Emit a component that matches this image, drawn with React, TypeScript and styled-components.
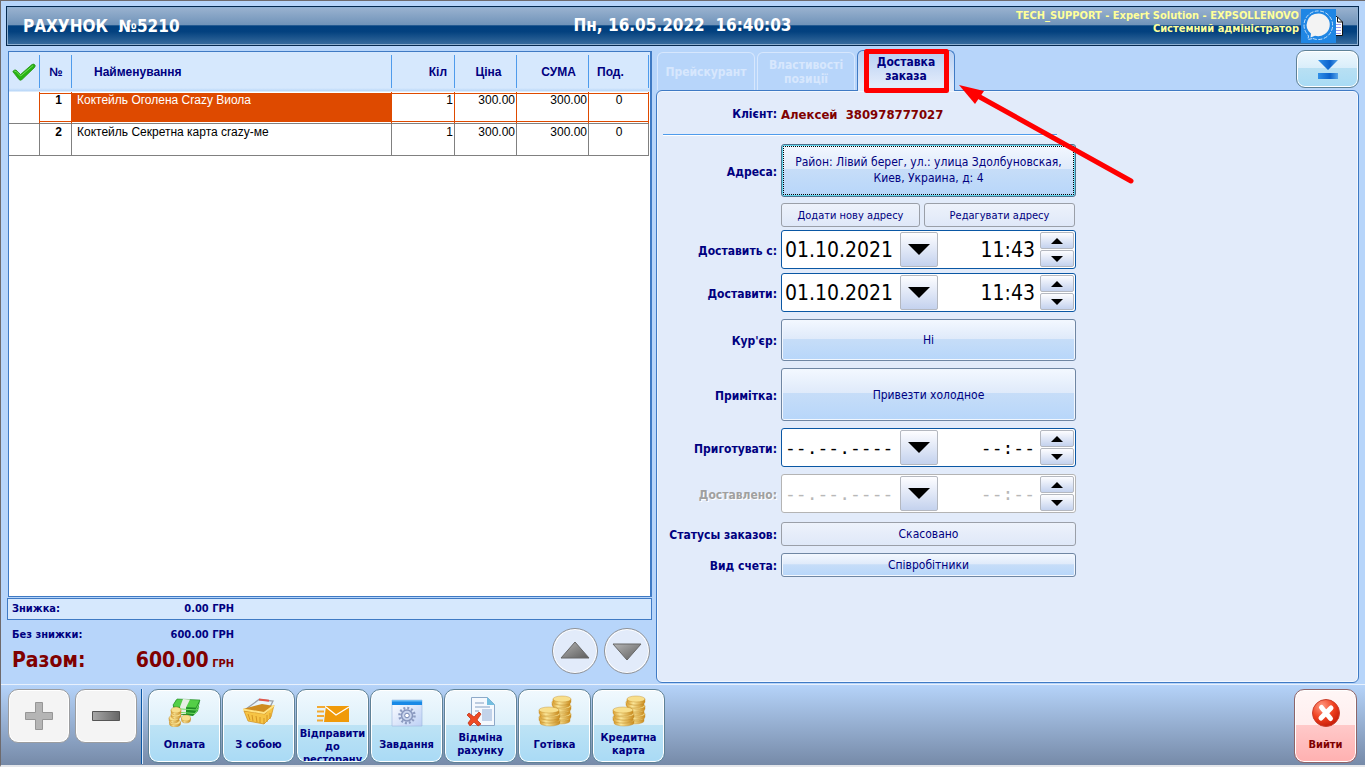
import React, { useId } from 'react';
import styled, { createGlobalStyle, css } from 'styled-components';

const UI_FONT = '"DejaVu Sans Condensed", "DejaVu Sans", sans-serif';
const GRID_FONT = '"Liberation Sans", Arial, sans-serif';

const GlobalStyle = createGlobalStyle`
  *, *::before, *::after { box-sizing: border-box; }
  body { margin: 0; font-family: ${UI_FONT}; color: #000080; }
  button, input { font-family: inherit; color: inherit; margin: 0; padding: 0; }
  button { cursor: pointer; }
  svg { display: block; flex: none; }
`;

const Window = styled.div`
  display: flex;
  flex-direction: column;
  min-height: 100vh;
  background: #b7d5fa;
  border: solid #6e6a6c;
  border-width: 1px 0 0 1px;
  border-bottom: 2px solid #e4e6ea;
`;

/* ---------- title bar ---------- */

const TitleBar = styled.header`
  display: grid;
  grid-template-columns: 1fr auto 1fr;
  height: 40px;
  margin: 5px 6px 4px 5px;
  color: #fff;
  border: 1px solid #06294f;
  background: linear-gradient(#9bb3d0, #6f93b9 48%, #00407f 49%, #03417f 65%, #3a6d9e);
  box-shadow: inset 0 0 0 1px #8fb0d2;
`;

const Title = styled.h1`
  margin: 0;
  padding-left: 16px;
  font-size: 17px;
  line-height: 38px;
  white-space: pre;
`;

const Clock = styled.time`
  font-size: 17px;
  font-weight: bold;
  line-height: 36px;
  white-space: pre;
`;

const Session = styled.div`
  display: flex;
  justify-content: flex-end;
  padding: 2px 15px 0 0;
`;

const UserInfo = styled.p`
  margin: 0 2px 0 0;
  color: #ffff99;
  font-size: 11px;
  font-weight: bold;
  line-height: 13px;
  text-align: right;
  white-space: nowrap;
`;

const DocSlot = styled.span`
  padding-top: 7px;
`;

/* ---------- main area ---------- */

const Main = styled.main`
  flex: 1;
  display: grid;
  grid-template-columns: minmax(0, 645fr) minmax(0, 703fr);
  gap: 4px;
  padding: 0 6px 1px 6px;
`;

const Bill = styled.section`
  display: flex;
  flex-direction: column;
`;

const BillSheet = styled.div`
  flex: 1;
  margin: 1px 0 0 1px;
  padding-right: 1px;
  border: 1px solid #3f7ac4;
  border-right-width: 2px;
  background: linear-gradient(#d6e8fd 0 36px, #b9d7f8 39px, #fff 40px) no-repeat 0 0 / 100% 40px, #fff;
`;

const BillTable = styled.table`
  width: 100%;
  table-layout: fixed;
  border-collapse: separate;
  border-spacing: 0;
  font-family: ${GRID_FONT};
  font-size: 12px;
  line-height: 14px;
`;

const Col = styled.col<{ $w?: number }>`
  ${(p) => p.$w && `width: ${p.$w}px;`}
`;

const HeadCell = styled.th<{ $align?: string; $pad?: string }>`
  height: 40px;
  padding: ${(p) => p.$pad ?? '0'};
  text-align: ${(p) => p.$align ?? 'center'};
  background: linear-gradient(#4e9bec, #4e9bec) no-repeat right 3px / 1px 33px;
`;

const Cell = styled.td<{
  $align?: string;
  $selected?: boolean;
  $filled?: boolean;
  $strong?: boolean;
  $pad?: string;
}>`
  height: 32px;
  padding: ${(p) => p.$pad ?? '1px 1px 0 5px'};
  vertical-align: top;
  text-align: ${(p) => p.$align ?? 'right'};
  font-weight: ${(p) => (p.$strong ? 'bold' : 'normal')};
  white-space: nowrap;
  color: #000;
  border: solid #808080;
  border-width: 0 1px 1px 0;
  ${(p) =>
    p.$selected &&
    css`
      border-right-color: #de4a00;
      box-shadow: inset 0 1px #fff, inset 0 2px #de4a00, inset 0 -1px #fff, inset 0 -2px #de4a00;
    `}
  ${(p) =>
    p.$filled &&
    css`
      color: #fff;
      background: #de4a00;
    `}
`;

const MarkCell = styled(Cell)`
  box-shadow: none;
`;

const DiscountBar = styled.div`
  height: 22px;
  margin-top: 1px;
  padding-left: 4px;
  border: 1px solid #3f7ac4;
  background: #d6e8fd;
`;

const Totals = styled.div`
  display: flex;
  justify-content: space-between;
  height: 63px;
  padding: 8px 2px 0 5px;
`;

const SumRow = styled.div<{ $line: number; $total?: boolean }>`
  display: grid;
  grid-template-columns: 80px 142px;
  align-items: baseline;
  font-size: 11px;
  font-weight: bold;
  line-height: ${(p) => p.$line}px;
  white-space: nowrap;
  color: ${(p) => (p.$total ? '#800000' : 'inherit')};
`;

const SumValue = styled.span`
  text-align: right;
`;

const Big = styled.strong`
  font-size: 21px;
`;

const Scroller = styled.div`
  display: flex;
  gap: 6px;
`;

const RoundButton = styled.button`
  display: grid;
  place-items: center;
  width: 46px;
  height: 46px;
  border: 1px solid #8f9297;
  border-radius: 50%;
  background: #e2ebfa;
  box-shadow: inset 0 0 0 1px #fff;
`;

/* ---------- right side ---------- */

const Side = styled.section`
  display: flex;
  flex-direction: column;
  min-width: 0;
`;

const TabRow = styled.div`
  display: flex;
  align-items: flex-end;
  height: 40px;
`;

const TabList = styled.div`
  display: flex;
  align-items: flex-end;
  gap: 2px;
  padding-left: 1px;
`;

const Tab = styled.button<{ $active?: boolean }>`
  position: relative;
  width: 98px;
  height: 38px;
  border: 1px solid #d7e7fd;
  border-bottom: 0;
  border-radius: 6px 6px 0 0;
  background: transparent;
  color: #d7e7fd;
  font-size: 12px;
  font-weight: bold;
  line-height: 14px;
  ${(p) =>
    p.$active &&
    css`
      z-index: 1;
      height: 41px;
      margin-bottom: -1px;
      padding-bottom: 5px;
      border-color: #3f7ac4;
      background: linear-gradient(#b7d0f3, #e2ebfa 85%);
      color: #000080;
    `}
`;

const Callout = styled.svg`
  position: absolute;
  left: 6px;
  top: -2px;
  pointer-events: none;
`;

const CollapseButton = styled.button`
  display: grid;
  place-items: center;
  align-self: flex-start;
  width: 63px;
  height: 38px;
  margin-left: auto;
  border: 1px solid #5f8297;
  border-radius: 9px;
  background: linear-gradient(#eff8fd, #d9eefa 47%, #b8e0f3 48%, #a8dbf5);
  box-shadow: inset 0 0 0 1px #fff;
`;

const Panel = styled.div`
  flex: 1;
  border: 1px solid #3f7ac4;
  border-radius: 6px;
  background: #e2ebfa;
  box-shadow: inset 0 0 0 1px #f2f7fe;
`;

const ClientRow = styled.div`
  display: grid;
  grid-template-columns: 114px auto;
  gap: 4px;
  width: 394px;
  height: 44px;
  margin-left: 6px;
  border-bottom: 1px solid #4e9bec;
  box-shadow: 0 1px #fff;
  font-size: 12px;
  font-weight: bold;
  line-height: 47px;
`;

const ClientCaption = styled.span`
  text-align: right;
`;

const ClientName = styled.output`
  color: #800000;
  font-size: 13px;
  white-space: pre;
`;

const Form = styled.form`
  padding: 9px 0 8px;
`;

const FormRow = styled.div<{ $h: number; $gap?: number }>`
  display: grid;
  grid-template-columns: 120px 295px;
  column-gap: 4px;
  align-items: center;
  min-height: ${(p) => p.$h}px;
  margin-top: ${(p) => p.$gap ?? 0}px;
`;

const FieldLabel = styled.label<{ $muted?: boolean }>`
  padding-top: 2px;
  color: ${(p) => (p.$muted ? '#a0a0a0' : 'inherit')};
  text-shadow: ${(p) => (p.$muted ? '1px 1px #fff' : 'none')};
  font-size: 12px;
  font-weight: bold;
  text-align: right;
  white-space: nowrap;
`;

const GlossButton = styled.button`
  height: 100%;
  border: 1px solid #6f86a3;
  border-radius: 3px;
  background: linear-gradient(#f3f8ff, #dfeafa 47%, #c6ddf8 48%, #b7d6fa);
  box-shadow: inset 0 0 0 1px #f2f7fe;
  font-size: 12px;
  line-height: 16px;
`;

const AddressButton = styled(GlossButton)`
  padding-bottom: 2px;
  border-color: #4f6f8c;
  box-shadow: inset 0 0 0 1px #62d9ee;
  outline: 1px dotted #000;
  outline-offset: -3px;
`;

const FlatButton = styled.button<{ $small?: boolean }>`
  height: 100%;
  min-height: 24px;
  border: 1px solid #9a9fa8;
  border-radius: 3px;
  background: linear-gradient(#edf2fb, #dfe8f8);
  font-size: ${(p) => (p.$small ? 11 : 12)}px;
`;

const AddressActions = styled.div`
  grid-column: 2;
  display: grid;
  grid-template-columns: 139px 151px;
  gap: 4px;
`;

const DateBox = styled.div<{ $muted?: boolean }>`
  display: grid;
  grid-template-columns: 117px 38px 1fr 34px;
  height: 39px;
  padding: 1px;
  border: 1px solid ${(p) => (p.$muted ? '#b4b4b4' : '#0a57a4')};
  border-radius: 3px;
  background: #fff;
  color: ${(p) => (p.$muted ? '#b8b8b8' : '#000')};
`;

const DateInput = styled.input<{ $align?: string; $blank?: boolean }>`
  min-width: 0;
  width: 100%;
  padding: ${(p) => (p.$align === 'right' ? '0 5px 0 0' : '0 0 0 2px')};
  border: 0;
  background: transparent;
  text-align: ${(p) => p.$align ?? 'left'};
  font-family: ${(p) => (p.$blank ? '"DejaVu Sans Mono", monospace' : UI_FONT)};
  font-size: ${(p) => (p.$blank ? 18 : 21)}px;
`;

const StepButton = styled.button`
  display: grid;
  place-items: center;
  border: 1px solid #b4b8c0;
  border-radius: 2px;
  background: linear-gradient(#fdfdff, #c4d2ee);
`;

const Stepper = styled.div`
  display: grid;
  grid-template-rows: 1fr 1fr;
  gap: 1px;
`;

/* ---------- bottom toolbar ---------- */

const Toolbar = styled.footer`
  display: flex;
  align-items: flex-start;
  height: 81px;
  padding: 4px 8px 0 7px;
  border-top: 1px solid #e8f1fd;
  background: linear-gradient(#b5d3f9, #768aa8);
`;

const Group = styled.div<{ $gap: number }>`
  display: flex;
  gap: ${(p) => p.$gap}px;
`;

const Divider = styled.span`
  width: 2px;
  height: 75px;
  margin: 0 5px 0 4px;
  background: linear-gradient(90deg, #0a57a4 50%, #dce9fa 50%);
`;

const TOOL_TONES = {
  blue: css`
    border-color: #5f8297;
    background: linear-gradient(#f1f9fe, #ddf0fa 48%, #bde3f5 49%, #a9daf5);
  `,
  red: css`
    border-color: #8f6468;
    color: #800000;
    background: linear-gradient(#fff6f6, #ffeeee 48%, #ffc9c9 49%, #ffb0b0);
  `,
};

const ToolButton = styled.button<{ $tone: 'blue' | 'red' }>`
  display: flex;
  flex-direction: column;
  align-items: center;
  width: ${(p) => (p.$tone === 'red' ? 63 : 73)}px;
  height: 74px;
  padding-top: 5px;
  border: 1px solid;
  border-radius: 10px;
  box-shadow: inset 0 0 0 1px #fff;
  font-size: 11px;
  font-weight: bold;
  line-height: 13px;
  ${(p) => TOOL_TONES[p.$tone]}
`;

const ToolLabel = styled.span`
  display: flex;
  align-items: safe center;
  justify-content: center;
  width: 100%;
  height: 34px;
  overflow: hidden;
`;

const CountButton = styled.button`
  display: grid;
  place-items: center;
  width: 62px;
  height: 54px;
  border: 1px solid #9b9da0;
  border-radius: 10px;
  background: #f4f4f4;
  box-shadow: inset 0 0 0 1px #fff;
`;

const ExitSlot = styled.div`
  margin-left: auto;
`;

/* ---------- icons ---------- */

const CheckIcon = () => (
  <svg width="24" height="18" viewBox="0 0 24 18">
    <path
      d="M.8 8.500Q2 6.600 4 7L8.500 11.500 20 1.500Q22 .3 23.300 2.500 23 4 22 5L10 16.500Q8.500 18 7 16.500Z"
      fill="#27b512"
      stroke="#269215"
      strokeWidth=".8"
      strokeLinejoin="round"
    />
    <path d="M2.500 8.600 4 8.300 8.600 13 21 2.600" fill="none" stroke="#74d95c" />
  </svg>
);

const ChatIcon = () => (
  <svg width="35" height="34" viewBox="0 0 35 34">
    <path fill="#1f86e4" d="M0 0h35v34H0z" />
    <path
      d="M12 29.500A14.300 14.300 0 1 0 5 23.500L7.500 27 7 30.500Z"
      fill="none"
      stroke="#c4e0fa"
      strokeDasharray="4 1.500"
    />
    <path d="M17.500 4.500A11.700 11.300 0 1 1 14 26.700L9.500 28.500 10 24.500A11.700 11.300 0 0 1 17.500 4.500Z" fill="#f3f3f3" />
  </svg>
);

const DocIcon = () => (
  <svg width="7" height="20" viewBox="0 0 7 20">
    <path d="M0 .5h1L6.500 6v13.500H0Z" fill="#fff" />
    <path d="M0 .5h1L6.500 6v13.500H0M1.500 1v5h5" fill="none" stroke="#111" />
    <path d="M0 8.500h5M0 11.500h5M0 14.500h5M0 17.500h5" stroke="#9a98ee" />
  </svg>
);

const CollapseIcon = () => (
  <svg width="20" height="19" viewBox="0 0 20 19">
    <defs>
      <linearGradient id="collapse">
        <stop stopColor="#2f8fe8" />
        <stop offset=".6" stopColor="#0b62cc" />
        <stop offset="1" stopColor="#55a4ea" />
      </linearGradient>
    </defs>
    <path d="M0 0h20L10 10ZM0 13h20v6H0Z" fill="url(#collapse)" />
  </svg>
);

const ScrollArrow = ({ down }: { down?: boolean }) => (
  <svg width="30" height="18" viewBox="0 0 30 18">
    <defs>
      <linearGradient id={down ? 'arrowDown' : 'arrowUp'} x2="1" y2="1">
        <stop stopColor="#b5b5b5" />
        <stop offset="1" stopColor="#5c5c5c" />
      </linearGradient>
    </defs>
    <path
      d={down ? 'M1 2h28L15 18Z' : 'M15 0 29 16H1Z'}
      fill={`url(#${down ? 'arrowDown' : 'arrowUp'})`}
      stroke="#666"
    />
  </svg>
);

const Triangle = ({ size, up }: { size: number; up?: boolean }) => (
  <svg width={size} height={size / 2} viewBox="0 0 20 10">
    <path d={up ? 'M0 10h20L10 0Z' : 'M0 0h20L10 10Z'} />
  </svg>
);

const PlusIcon = () => (
  <svg width="28" height="28" viewBox="0 0 28 28">
    <path d="M10.500 .5h7v10h10v7h-10v10h-7v-10H.5v-7h10Z" fill="#b5b5b5" stroke="#969696" />
  </svg>
);

const MinusIcon = () => (
  <svg width="28" height="10" viewBox="0 0 28 10">
    <defs>
      <linearGradient id="minus">
        <stop stopColor="#a8a8a8" />
        <stop offset="1" stopColor="#666" />
      </linearGradient>
    </defs>
    <path d="M.5 .5h27v9H.5Z" fill="url(#minus)" stroke="#555" />
  </svg>
);

const Coin = ({ x, y, rx = 7, h = 3 }: { x: number; y: number; rx?: number; h?: number }) => (
  <g stroke="#c08a28" strokeWidth=".4">
    <path d={`M${x - rx} ${y}v${h}a${rx} 3 0 0 0 ${rx * 2} 0v-${h}Z`} fill="url(#coinEdge)" />
    <ellipse cx={x} cy={y} rx={rx} ry="3" fill="#f8df8c" />
  </g>
);

const CoinEdge = () => (
  <defs>
    <linearGradient id="coinEdge">
      <stop stopColor="#d89a2a" />
      <stop offset=".35" stopColor="#fbe79a" />
      <stop offset="1" stopColor="#c98a1c" />
    </linearGradient>
  </defs>
);

const MoneyIcon = () => (
  <svg width="34" height="32" viewBox="0 0 34 32">
    <CoinEdge />
    <path d="M5 11 8 5 32 5 30 16 25 21 7 19Z" fill="#1f8e25" />
    <path d="M5 10 9 4 32 5 28 13 6 12Z" fill="#54cf47" stroke="#1d8722" strokeWidth=".6" />
    <path d="M15 4 22 4.500 18 12.500 18 19 13 19 12 12Z" fill="#e8eee4" />
    <path d="M6 13.500 28 15 31 9M7 17l20 1.500 4-6" fill="none" stroke="#74df65" />
    <Coin x={18} y={23} rx={4.5} h={2} />
    <Coin x={7} y={27} rx={5.5} h={2} />
    <Coin x={6} y={23} rx={5} h={2} />
    <Coin x={8} y={19} rx={5} h={2} />
    <Coin x={8} y={15} rx={5} h={2} />
  </svg>
);

const BasketIcon = () => (
  <svg width="34" height="32" viewBox="0 0 34 32">
    <path d="M4 14 17 4.500 31 6 25 18" fill="none" stroke="#9aa0a8" strokeWidth="1.300" />
    <path d="m17 4.500 10 1.200" stroke="#e2574c" strokeWidth="2" />
    <path d="M1 14 20 9 32 11 23 19 3 17Z" fill="#cf8c1e" />
    <path d="M2 16 23 19 32 10 29 22 22 29 6 26Z" fill="#f6c445" stroke="#d08e1d" strokeWidth=".7" />
    <path d="m6 19 2 6m2-5 1 6m3-5 1 6m3-5v6m4-5v6m3-9v7m3-9v6" stroke="#d59423" strokeWidth="1" />
    <path d="M1 14.500 22 18 32 10.500" fill="none" stroke="#ffe382" strokeWidth="2" />
  </svg>
);

const MailIcon = () => (
  <svg width="34" height="32" viewBox="0 0 34 32">
    <path d="M10 11h23v16H8Z" fill="#f09a0a" />
    <path d="m10 12 10 8L33 12" fill="none" stroke="#fff" strokeWidth="1.400" />
    <path d="M1 12h8M1 16.500h7M1 21h7M1 25.500h6" stroke="#f3aa33" strokeWidth="2" />
  </svg>
);

const TaskIcon = () => (
  <svg width="32" height="32" viewBox="0 0 32 32">
    <defs>
      <linearGradient id="taskWindow" x2="1" y2="1">
        <stop stopColor="#fff" />
        <stop offset="1" stopColor="#bdd0f5" />
      </linearGradient>
    </defs>
    <path d="M1 5h30v26H1Z" fill="url(#taskWindow)" stroke="#9bb6dd" strokeWidth=".6" />
    <path d="M1 5h30v5H1Z" fill="#1989e6" />
    <path d="M1 5h30v1.500H1Z" fill="#6bbcf5" />
    <circle cx="16" cy="20.500" r="7.500" fill="none" stroke="#8d9cc2" strokeWidth="2.500" strokeDasharray="2 1.930" />
    <circle cx="16" cy="20.500" r="5.500" fill="#c9d5ee" stroke="#8796bd" strokeWidth="1.500" />
    <circle cx="16" cy="20.500" r="2.300" fill="#fff" stroke="#7486b2" />
  </svg>
);

const CancelDocIcon = () => (
  <svg width="32" height="32" viewBox="0 0 32 32">
    <path d="M6.500 2.500h16l7 7v21h-23Z" fill="#f5f9fe" stroke="#8da9c8" />
    <path d="M22 2v8h8Z" fill="#73bfe0" />
    <path d="M10 8h9M10 12h15M10 20h4M10 16h4" stroke="#a9bdd6" strokeWidth="1.300" />
    <path d="M17 14h10v12H17Z" fill="#c2d3ea" />
    <path d="m4 18 5 4 5-5 2 2-4 6 4 4-3 2-4-4-4 4-2-3 3-4-4-4Z" fill="#ee4a25" stroke="#b92c10" strokeWidth=".7" />
  </svg>
);

const CoinsIcon = () => (
  <svg width="34" height="32" viewBox="0 0 34 32">
    <CoinEdge />
    {[23, 19, 15, 11, 7, 4].map((y, i) => (
      <Coin key={y} x={i % 2 ? 24 : 23} y={y} rx={9} />
    ))}
    {[25, 22, 19, 15].map((y, i) => (
      <Coin key={y} x={i % 2 ? 11 : 12} y={y} rx={10} />
    ))}
  </svg>
);

const ExitIcon = () => (
  <svg width="30" height="32" viewBox="0 0 30 32">
    <defs>
      <radialGradient id="exit" cx=".35" cy=".25" r=".8">
        <stop stopColor="#ff9c85" />
        <stop offset=".55" stopColor="#f0401f" />
        <stop offset="1" stopColor="#c41a08" />
      </radialGradient>
    </defs>
    <circle cx="15" cy="18" r="13.500" fill="url(#exit)" stroke="#c9402e" />
    <path d="m10.500 12.500 9 11M20 13 10 23" stroke="#fff" strokeWidth="5" strokeLinecap="round" />
  </svg>
);

/* ---------- data ---------- */

const rows = [
  { n: 1, name: 'Коктейль Оголена Crazy Виола', qty: '1', price: '300.00', sum: '300.00', served: '0', selected: true },
  { n: 2, name: 'Коктейль Секретна карта crazy-ме', qty: '1', price: '300.00', sum: '300.00', served: '0', selected: false },
];

const tools = [
  { label: 'Оплата', icon: <MoneyIcon /> },
  { label: 'З собою', icon: <BasketIcon /> },
  { label: 'Відправити до ресторану', icon: <MailIcon /> },
  { label: 'Завдання', icon: <TaskIcon /> },
  { label: 'Відміна рахунку', icon: <CancelDocIcon /> },
  { label: 'Готівка', icon: <CoinsIcon /> },
  { label: 'Кредитна карта', icon: <CoinsIcon /> },
];

type DateRowProps = { label: string; date: string; time: string; gap: number; muted?: boolean; blank?: boolean };

const DateRow = ({ label, date, time, gap, muted, blank }: DateRowProps) => {
  const id = useId();
  return (
    <FormRow $h={39} $gap={gap}>
      <FieldLabel htmlFor={id} $muted={muted}>{label}</FieldLabel>
      <DateBox $muted={muted}>
        <DateInput id={id} defaultValue={date} $blank={blank} />
        <StepButton type="button" aria-label="Календар"><Triangle size={22} /></StepButton>
        <DateInput aria-label={`${label} час`} defaultValue={time} $align="right" $blank={blank} />
        <Stepper>
          <StepButton type="button" aria-label="Більше"><Triangle size={12} up /></StepButton>
          <StepButton type="button" aria-label="Менше"><Triangle size={12} /></StepButton>
        </Stepper>
      </DateBox>
    </FormRow>
  );
};

export default function App() {
  return (
    <>
      <GlobalStyle />
      <Window>
        <TitleBar>
          <Title>{'РАХУНОК  №5210'}</Title>
          <Clock dateTime="2022-05-16T16:40:03">{'Пн, 16.05.2022  16:40:03'}</Clock>
          <Session>
            <UserInfo>
              TECH_SUPPORT - Expert Solution - EXPSOLLENOVO
              <br />
              Системний адміністратор
            </UserInfo>
            <ChatIcon />
            <DocSlot><DocIcon /></DocSlot>
          </Session>
        </TitleBar>

        <Main>
          <Bill>
            <BillSheet>
              <BillTable>
                <colgroup>
                  <Col $w={31} />
                  <Col $w={32} />
                  <Col />
                  <Col $w={63} />
                  <Col $w={62} />
                  <Col $w={72} />
                  <Col $w={60} />
                </colgroup>
                <thead>
                  <tr>
                    <HeadCell $pad="0 0 0 3px" aria-label="Вибрано"><CheckIcon /></HeadCell>
                    <HeadCell>№</HeadCell>
                    <HeadCell $align="left" $pad="0 0 0 22px">Найменування</HeadCell>
                    <HeadCell $align="right" $pad="0 8px 0 0">Кіл</HeadCell>
                    <HeadCell $pad="0 0 0 5px">Ціна</HeadCell>
                    <HeadCell $align="right" $pad="0 13px 0 0">СУМА</HeadCell>
                    <HeadCell $align="left" $pad="0 0 0 8px">Под.</HeadCell>
                  </tr>
                </thead>
                <tbody>
                  {rows.map((r) => (
                    <tr key={r.n}>
                      <MarkCell $selected={r.selected} />
                      <Cell $selected={r.selected} $strong $pad="1px 9px 0 0">{r.n}</Cell>
                      <Cell $selected={r.selected} $filled={r.selected} $align="left">{r.name}</Cell>
                      <Cell $selected={r.selected}>{r.qty}</Cell>
                      <Cell $selected={r.selected}>{r.price}</Cell>
                      <Cell $selected={r.selected}>{r.sum}</Cell>
                      <Cell $selected={r.selected} $align="center" $pad="1px 0 0 1px">{r.served}</Cell>
                    </tr>
                  ))}
                </tbody>
              </BillTable>
            </BillSheet>
            <DiscountBar>
              <SumRow $line={20}>
                <span>Знижка:</span>
                <SumValue>0.00 ГРН</SumValue>
              </SumRow>
            </DiscountBar>
            <Totals>
              <div>
                <SumRow $line={14}>
                  <span>Без знижки:</span>
                  <SumValue>600.00 ГРН</SumValue>
                </SumRow>
                <SumRow $line={36} $total>
                  <Big>Разом:</Big>
                  <SumValue><Big>600.00</Big> ГРН</SumValue>
                </SumRow>
              </div>
              <Scroller>
                <RoundButton type="button" aria-label="Вгору"><ScrollArrow /></RoundButton>
                <RoundButton type="button" aria-label="Вниз"><ScrollArrow down /></RoundButton>
              </Scroller>
            </Totals>
          </Bill>

          <Side>
            <TabRow>
              <TabList role="tablist">
                <Tab role="tab" aria-selected={false}>Прейскурант</Tab>
                <Tab role="tab" aria-selected={false}>Властивості позиції</Tab>
                <Tab role="tab" aria-selected $active>
                  Доставка заказа
                  <Callout width="272" height="136" viewBox="0 0 272 136" aria-hidden="true">
                    <path d="M2.500 2.500h80v39h-80Z" fill="none" stroke="#f00" strokeWidth="5" strokeLinejoin="round" />
                    <path d="m114 47 153 85" stroke="#f00" strokeWidth="5" strokeLinecap="round" />
                    <path d="m95 36 25 6-9 13Z" fill="#f00" />
                  </Callout>
                </Tab>
              </TabList>
              <CollapseButton type="button" aria-label="Згорнути"><CollapseIcon /></CollapseButton>
            </TabRow>

            <Panel role="tabpanel">
              <ClientRow>
                <ClientCaption>Клієнт:</ClientCaption>
                <ClientName>{'Алексей  380978777027'}</ClientName>
              </ClientRow>
              <Form>
                <FormRow $h={53}>
                  <FieldLabel htmlFor="address">Адреса:</FieldLabel>
                  <AddressButton type="button" id="address">
                    Район: Лівий берег, ул.: улица Здолбуновская,
                    <br />
                    Киев, Украина, д: 4
                  </AddressButton>
                </FormRow>
                <FormRow $h={24} $gap={6}>
                  <AddressActions>
                    <FlatButton type="button" $small>Додати нову адресу</FlatButton>
                    <FlatButton type="button" $small>Редагувати адресу</FlatButton>
                  </AddressActions>
                </FormRow>
                <DateRow label="Доставить с:" date="01.10.2021" time="11:43" gap={3} />
                <DateRow label="Доставити:" date="01.10.2021" time="11:43" gap={4} />
                <FormRow $h={42} $gap={7}>
                  <FieldLabel htmlFor="courier">Кур'єр:</FieldLabel>
                  <GlossButton type="button" id="courier">Ні</GlossButton>
                </FormRow>
                <FormRow $h={53} $gap={7}>
                  <FieldLabel htmlFor="note">Примітка:</FieldLabel>
                  <GlossButton type="button" id="note">Привезти холодное</GlossButton>
                </FormRow>
                <DateRow label="Приготувати:" date="--.--.----" time="--:--" gap={7} blank />
                <DateRow label="Доставлено:" date="--.--.----" time="--:--" gap={7} blank muted />
                <FormRow $h={24} $gap={9}>
                  <FieldLabel htmlFor="status">Статусы заказов:</FieldLabel>
                  <FlatButton type="button" id="status">Скасовано</FlatButton>
                </FormRow>
                <FormRow $h={24} $gap={7}>
                  <FieldLabel htmlFor="kind">Вид счета:</FieldLabel>
                  <GlossButton type="button" id="kind">Співробітники</GlossButton>
                </FormRow>
              </Form>
            </Panel>
          </Side>
        </Main>

        <Toolbar>
          <Group $gap={5}>
            <CountButton type="button" aria-label="Додати"><PlusIcon /></CountButton>
            <CountButton type="button" aria-label="Відняти"><MinusIcon /></CountButton>
          </Group>
          <Divider />
          <Group $gap={1}>
            {tools.map((t) => (
              <ToolButton key={t.label} type="button" $tone="blue">
                {t.icon}
                <ToolLabel>{t.label}</ToolLabel>
              </ToolButton>
            ))}
          </Group>
          <ExitSlot>
            <ToolButton type="button" $tone="red">
              <ExitIcon />
              <ToolLabel>Вийти</ToolLabel>
            </ToolButton>
          </ExitSlot>
        </Toolbar>
      </Window>
    </>
  );
}
